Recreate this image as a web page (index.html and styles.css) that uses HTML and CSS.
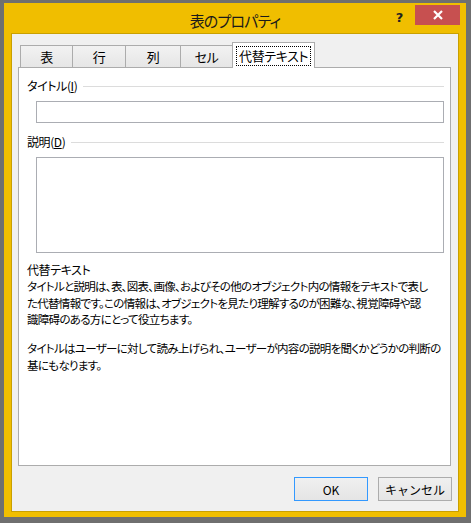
FILE: index.html
```html
<!DOCTYPE html>
<html lang="ja">
<head>
  <meta charset="UTF-8">
  <title>表のプロパティ</title>
  <link rel="stylesheet" href="styles.css">
</head>
<body>
  <!-- Dialog window -->
  <div class="window">
    <div class="titlebar">
      <span></span>
      <span class="title">表のプロパティ</span>
      <div class="controls">
        <span class="help">?</span>
        <span class="close">
          <svg width="10" height="10" viewBox="0 0 10 10"><path d="M1 1 L9 9 M9 1 L1 9" stroke="#fff" stroke-width="2.2"/></svg>
        </span>
      </div>
    </div>
    <div class="client">
      <!-- Tab strip -->
      <div class="tabs">
        <div class="tab t1">表</div>
        <div class="tab t2">行</div>
        <div class="tab t3">列</div>
        <div class="tab t4">セル</div>
        <div class="tab active"><span class="focus">代替テキスト</span></div>
      </div>
      <!-- Alt text page -->
      <div class="panel">
        <div class="group-label"><span>タイトル(<u>I</u>)</span><span class="rule"></span></div>
        <div class="field"></div>
        <div class="group-label second"><span>説明(<u>D</u>)</span><span class="rule"></span></div>
        <div class="area"></div>
        <div class="help-head">代替テキスト</div>
        <p class="help-text">タイトルと説明は、表、図表、画像、およびその他のオブジェクト内の情報をテキストで表し<br>た代替情報です。この情報は、オブジェクトを見たり理解するのが困難な、視覚障碍や認<br>識障碍のある方にとって役立ちます。</p>
        <p class="help-text gap">タイトルはユーザーに対して読み上げられ、ユーザーが内容の説明を聞くかどうかの判断の<br>基にもなります。</p>
      </div>
      <div class="buttons">
        <button class="btn default">OK</button>
        <button class="btn">キャンセル</button>
      </div>
    </div>
  </div>
</body>
</html>
```

FILE: styles.css
```css
html, body { margin:0; padding:0; }
body {
  background: #6f6f6f;
  padding: 3px 0 0 4px;
  height: 523px; box-sizing: border-box; overflow: hidden;
  font-family: "Noto Sans CJK JP", "Noto Sans", sans-serif;
  font-feature-settings: "palt";
  font-size: 12px; color: #000;
  letter-spacing: -0.4px;
}
/* Window frame */
.window {
  width: 462px; height: 514px; box-sizing: border-box;
  background: #f0be00;
  padding: 0 7px 5px 7px;
  display: flex; flex-direction: column;
}
.titlebar {
  height: 30px; flex: none;
  display: grid; grid-template-columns: 1fr auto 1fr;
  align-items: start;
}
.title { font-size: 15px; line-height: 20px; padding-top: 8px; color: #1a1a1a; letter-spacing: -0.8px; }
.controls { justify-self: end; display: flex; align-items: flex-start; margin-right: -1px; padding-top: 2px; }
.help {
  font-family: "DejaVu Sans", sans-serif; font-weight: bold; font-size: 13px;
  color: #222; line-height: 14px; margin: 6px 12px 0 0;
}
.close {
  width: 45px; height: 20px; background: #c75050;
  display: flex; align-items: center; justify-content: center;
}
/* Client area */
.client {
  flex: 1; background: #f0f0f0;
  border: 1px solid #c9a000;
  padding: 8px 7px 0 6px;
  display: flex; flex-direction: column;
}
.tabs { display: flex; align-items: flex-end; height: 25px; padding-left: 2px; position: relative; z-index: 1; }
.tab {
  height: 22px; box-sizing: border-box;
  border: 1px solid #acacac; border-bottom: none;
  background: linear-gradient(#f2f2f2, #e6e6e6);
  display: flex; align-items: center; justify-content: center;
  font-size: 13px; margin-left: -1px;
}
.tab.t1 { width: 53px; margin-left: 0; }
.tab.t2 { width: 54px; }
.tab.t3 { width: 56px; }
.tab.t4 { width: 53px; }
.tab.active {
  width: 83px; height: 26px; margin-bottom: -1px;
  background: #fff; padding-bottom: 1px;
}
.focus { border: 1px dotted #000; padding: 0 2px; line-height: 18px; margin-top: 1px; }
.panel {
  height: 399px; box-sizing: border-box;
  background: #fff; border: 1px solid #acacac;
  padding: 10px 6px 0 8px;
}
.group-label { display: flex; align-items: center; line-height: 16px; }
.group-label.second { margin-top: 11px; }
.rule { flex: 1; border-top: 1px solid #dcdcdc; margin-left: 6px; }
.field, .area { border: 1px solid #abadb3; margin-left: 9px; box-sizing: border-box; background: #fff; }
.field { height: 22px; margin-top: 7px; }
.area { height: 96px; margin-top: 7px; }
.help-head { margin-top: 9px; line-height: 16px; }
.help-text { margin: 0; line-height: 16.5px; white-space: nowrap; font-size: 11.5px; letter-spacing: -0.7px; }
.help-text.gap { margin-top: 12.5px; }
/* Buttons */
.buttons { display: flex; justify-content: flex-end; gap: 10px; margin: 11px -1px 0 0; }
.btn {
  width: 74px; height: 24px; box-sizing: border-box;
  border: 1px solid #acacac; background: linear-gradient(#f0f0f0, #e5e5e5);
  font-family: inherit; font-size: 12px; padding: 0; color: #000;
}
.btn.default { border-color: #3399ff; }
```
